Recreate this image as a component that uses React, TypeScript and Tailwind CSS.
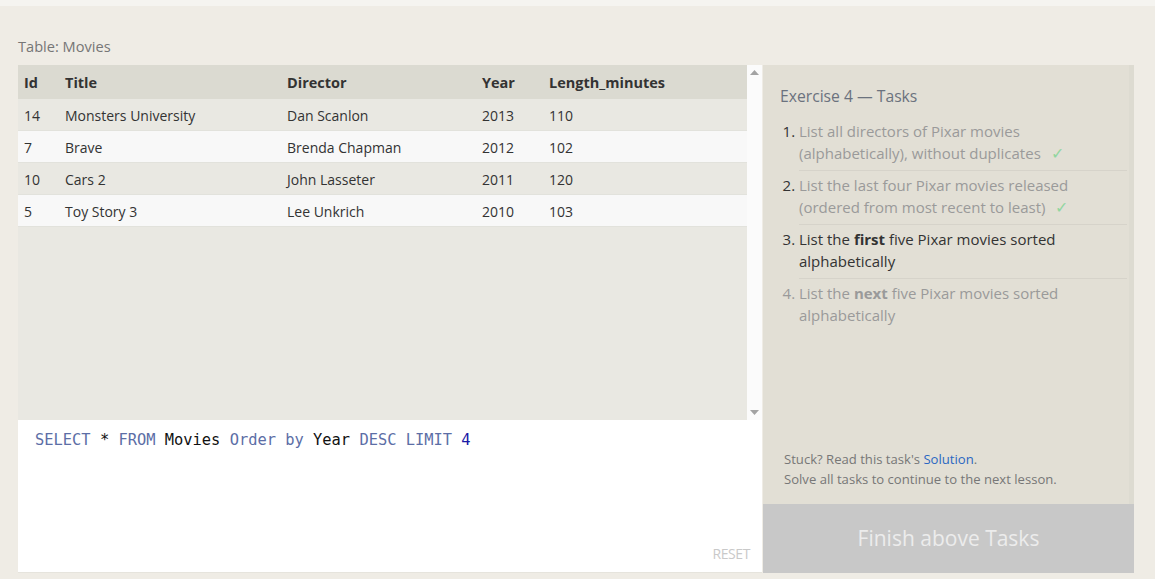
import React from "react";

const rows = [
  ["14", "Monsters University", "Dan Scanlon", "2013", "110"],
  ["7", "Brave", "Brenda Chapman", "2012", "102"],
  ["10", "Cars 2", "John Lasseter", "2011", "120"],
  ["5", "Toy Story 3", "Lee Unkrich", "2010", "103"],
];

const widths = ["w-[41px]", "w-[222px]", "w-[195px]", "w-[67px]", "flex-1"];

function Check() {
  return <span className="ml-[10px] text-[16px] text-[#92d6a0]">✓</span>;
}

export default function App() {
  return (
    <div
      className="w-[1155px] h-[579px] bg-[#efece5] overflow-hidden flex flex-col"
      style={{ fontFamily: '"Open Sans", "Liberation Sans", sans-serif' }}
    >
      <div className="h-[6px] bg-[#f5f4f0] shrink-0" />
      <div className="pl-[18px] pt-[30px] h-[59px] text-[14.6px] leading-[20px] text-[#767676] shrink-0">
        Table: Movies
      </div>
      <div className="flex pl-[18px] h-[508px]">
        {/* Left column */}
        <div className="w-[744px] flex flex-col">
          <div className="h-[355px] flex bg-[#e9e8e2]">
            <div className="flex-1 flex flex-col">
              <div className="flex h-[34px] items-center pt-[1px] bg-[#dbdad1] text-[14.5px] font-bold text-[#333]">
                {["Id", "Title", "Director", "Year", "Length_minutes"].map((h, i) => (
                  <div key={h} className={`${widths[i]} pl-[6px]`}>
                    {h}
                  </div>
                ))}
              </div>
              {rows.map((r, ri) => (
                <div
                  key={ri}
                  className={`flex h-[32px] items-center pt-[1px] text-[14px] text-[#333] border-b border-[#e2e2dc] ${
                    ri % 2 === 0 ? "bg-[#e9e8e2]" : "bg-[#f8f8f8]"
                  }`}
                >
                  {r.map((c, i) => (
                    <div key={i} className={`${widths[i]} pl-[6px]`}>
                      {c}
                    </div>
                  ))}
                </div>
              ))}
            </div>
            <div className="w-[15px] bg-[#fbfbfb] flex flex-col justify-between items-center py-[5px]">
              <svg width="9" height="5" viewBox="0 0 9 5">
                <path d="M0 5 L4.5 0 L9 5 Z" fill="#a3a3a3" />
              </svg>
              <svg width="9" height="5" viewBox="0 0 9 5">
                <path d="M0 0 L4.5 5 L9 0 Z" fill="#a3a3a3" />
              </svg>
            </div>
          </div>
          <div className="h-[153px] bg-white border-b border-[#e6e4dd] flex flex-col pl-[17px] pr-[12px] pt-[10px] pb-[9px]">
            <div
              className="text-[15.4px] leading-[20px] whitespace-pre"
              style={{ fontFamily: '"DejaVu Sans Mono", "Liberation Mono", monospace' }}
            >
              <span className="text-[#5c6ea6]">SELECT</span>
              <span className="text-[#111]"> * </span>
              <span className="text-[#5c6ea6]">FROM</span>
              <span className="text-[#111]"> Movies </span>
              <span className="text-[#5c6ea6]">Order by</span>
              <span className="text-[#111]"> Year </span>
              <span className="text-[#5c6ea6]">DESC LIMIT</span>
              <span className="text-[#1a1aa6]"> 4</span>
            </div>
            <div className="flex-1" />
            <div className="self-end text-[14px] leading-[18px] text-[#c9c9c9] tracking-[-0.4px]">RESET</div>
          </div>
        </div>
        {/* Right column */}
        <div className="ml-[1px] w-[371px] bg-[#e2dfd5] flex flex-col">
          <div className="flex-1 flex flex-col border-r-[5px] border-[#dddbd1]">
            <div className="pl-[17px] pr-[2px] pt-[20px] flex-1">
              <div className="text-[15.7px] leading-[22px] text-[#6b727e]">Exercise 4 — Tasks</div>
              <ol className="list-decimal pl-[19px] mt-[10px] text-[15px] leading-[22px]">
                <li className="pt-[3px] pb-[6px] border-b border-[#d6d3ca] text-[#9a9a9a] marker:text-[#333]">
                  List all directors of Pixar movies
                  <br />
                  (alphabetically), without duplicates
                  <Check />
                </li>
                <li className="pt-[3px] pb-[6px] border-b border-[#d6d3ca] text-[#9a9a9a] marker:text-[#333]">
                  List the last four Pixar movies released
                  <br />
                  (ordered from most recent to least)
                  <Check />
                </li>
                <li className="pt-[3px] pb-[6px] border-b border-[#d6d3ca] text-[#333] marker:text-[#333]">
                  List the <b>first</b> five Pixar movies sorted
                  <br />
                  alphabetically
                </li>
                <li className="pt-[3px] pb-[6px] text-[#9a9a9a] marker:text-[#9a9a9a]">
                  List the <b>next</b> five Pixar movies sorted
                  <br />
                  alphabetically
                </li>
              </ol>
            </div>
            <div className="pl-[21px] pb-[15px] text-[13.1px] leading-[20px] text-[#777]">
              <div>
                Stuck? Read this task's <span className="text-[#2a67c2]">Solution</span>.
              </div>
              <div>Solve all tasks to continue to the next lesson.</div>
            </div>
          </div>
          <div className="h-[69px] bg-[#c8c8c8] flex items-center justify-center text-[21px] text-[#ececec]">
            Finish above Tasks
          </div>
        </div>
      </div>
    </div>
  );
}
